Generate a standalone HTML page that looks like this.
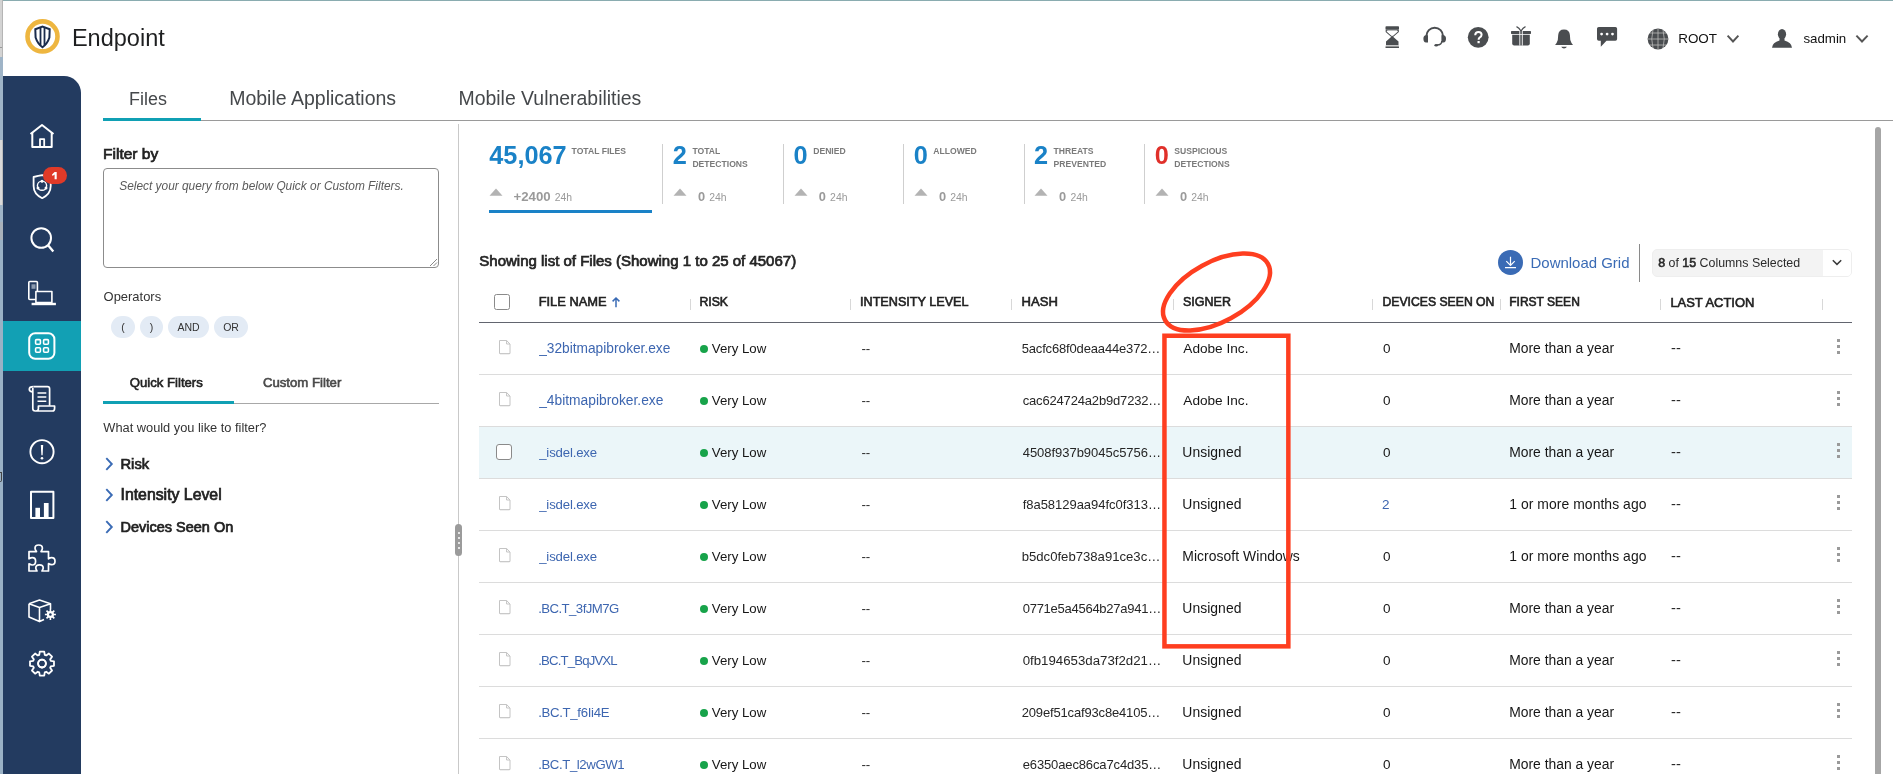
<!DOCTYPE html>
<html><head><meta charset="utf-8"><title>Endpoint</title>
<style>
html,body{margin:0;padding:0;background:#fff;width:1893px;height:774px;overflow:hidden;position:relative}
body{font-family:"Liberation Sans",sans-serif}
.t{position:absolute;white-space:nowrap;line-height:1}
svg{overflow:visible}
</style></head><body>
<div style="position:absolute;left:0;top:0;width:1893px;height:774px;will-change:transform">
<div style="position:absolute;left:0px;top:0px;width:1893px;height:1px;background:#8aacb0"></div>
<div style="position:absolute;left:0px;top:0px;width:3px;height:57px;background:#d3d3d3"></div>
<div style="position:absolute;left:2px;top:0px;width:1px;height:57px;background:#b5b5b5"></div>
<div style="position:absolute;left:0px;top:47px;width:2px;height:1px;background:#9a9a9a"></div>
<div style="position:absolute;left:0px;top:57px;width:3px;height:83px;background:#9fb4c7"></div>
<div style="position:absolute;left:0px;top:140px;width:3px;height:65px;background:#d9d9d9"></div>
<div style="position:absolute;left:2px;top:140px;width:1px;height:65px;background:#bdbdbd"></div>
<div style="position:absolute;left:0px;top:205px;width:3px;height:17px;background:#9fb4c7"></div>
<div style="position:absolute;left:0px;top:222px;width:3px;height:18px;background:#a9b1ba"></div>
<div style="position:absolute;left:0px;top:240px;width:3px;height:534px;background:#9ab1c5"></div>
<div style="position:absolute;left:0px;top:472px;width:2px;height:10px;background:#444;border-radius:0 0 2px 0"></div>
<div style="position:absolute;left:0px;top:473px;width:1px;height:8px;background:#9ab1c5"></div>
<svg style="position:absolute;left:0;top:0" width="90" height="70">
<circle cx="42.5" cy="36.4" r="15" fill="none" stroke="#eeb640" stroke-width="4.6"/>
<path d="M35.3 29.2 L42.5 26.6 L49.7 29.2 L49.4 37.5 Q47.5 43.6 42.5 47.2 Q37.5 43.6 35.6 37.5 Z" fill="none" stroke="#1b2c4c" stroke-width="2"/>
<path d="M40.5 27.8 V45.2 M44.5 27.8 V45.2" stroke="#1b2c4c" stroke-width="1.8"/>
</svg>
<div class="t" style="left:71.9px;top:27px;font-size:23.54px;font-weight:normal;font-style:normal;color:#1e1f20;">Endpoint</div>
<svg style="position:absolute;left:1370px;top:15px" width="523" height="45" viewBox="1370 15 523 45">
<g fill="#4a4d50">
<!-- hourglass -->
<rect x="1385.5" y="26.2" width="13.5" height="3.6" rx="0.8"/>
<path d="M1386.2 30.2 H1398.3 V31.8 L1393.2 36.3 H1391.3 L1386.2 31.8 Z" fill="none" stroke="#4a4d50" stroke-width="1.1"/>
<path d="M1392.2 36 L1398.5 41.5 V45 H1386 V41.5 Z"/>
<rect x="1385.5" y="46.3" width="13.5" height="1.6" rx="0.5"/>
<rect x="1385.8" y="45" width="13" height="1.3" fill="#c9c9c9"/>
<!-- headset -->
<path d="M1426.4 38.5 V36 A8.3 8.3 0 0 1 1443 36 V40" fill="none" stroke="#4a4d50" stroke-width="2"/>
<path d="M1428 35.2 H1426 A2.6 3.6 0 0 0 1426 42.4 H1428 Z"/>
<path d="M1441.4 35.2 H1443.4 A2.6 3.6 0 0 1 1443.4 42.4 H1441.4 Z"/>
<path d="M1441.8 41 Q1441.8 45 1437 45" fill="none" stroke="#4a4d50" stroke-width="1.4"/>
<ellipse cx="1436.2" cy="45.3" rx="1.8" ry="1.3"/>
<!-- question -->
<circle cx="1478.2" cy="37.3" r="10.4"/>
<!-- gift -->
<rect x="1511" y="31" width="20" height="2.9" rx="0.6"/>
<path d="M1512.2 34.8 H1529.8 V43.6 Q1529.8 45.6 1527.8 45.6 H1514.2 Q1512.2 45.6 1512.2 43.6 Z"/>
<!-- bell -->
<path d="M1564 29.4 Q1569.6 29.4 1569.9 35 L1570.3 40 Q1571 42.6 1573 44.9 H1555.1 Q1557.1 42.6 1557.8 40 L1558.2 35 Q1558.5 29.4 1564 29.4 Z"/>
<path d="M1561.2 46.8 H1566.9 Q1566 48.4 1564 48.4 Q1562.1 48.4 1561.2 46.8 Z"/>
<!-- chat -->
<path d="M1598.8 26.9 H1615.4 Q1617.1 26.9 1617.1 28.6 V39 Q1617.1 40.8 1615.4 40.8 H1606.5 L1600.8 46.8 V40.8 H1598.8 Q1597 40.8 1597 39 V28.6 Q1597 26.9 1598.8 26.9 Z"/>
<!-- user -->
<ellipse cx="1782" cy="34.3" rx="4.1" ry="5.3"/>
<path d="M1779.5 38.5 H1784.5 V40.6 Q1791.5 42.5 1792 47.8 H1772 Q1772.5 42.5 1779.5 40.6 Z"/>
</g>
<g fill="#fff">
<path d="M1387.4 30.6 H1397.1 V31.6 L1392.6 35.6 H1391.9 L1387.4 31.6 Z"/>
</g>
<path d="M1475.2 35.2 Q1475.4 32 1478.5 32 Q1481.6 32 1481.6 34.8 Q1481.6 36.6 1479.6 37.6 Q1478.6 38.2 1478.6 39.8" fill="none" stroke="#fff" stroke-width="2"/><rect x="1477.5" y="41" width="2.2" height="2.2" fill="#fff"/>
<path d="M1519.8 31 V45.6 M1522.3 31 V45.6" stroke="#fff" stroke-width="0.9"/>
<path d="M1521 31 Q1519 27.5 1516.5 26.6 M1521 31 Q1523 27.5 1525.5 26.6" fill="none" stroke="#4a4d50" stroke-width="1.3"/>
<circle cx="1601.6" cy="34.1" r="1.4" fill="#fff"/><circle cx="1607.1" cy="34.1" r="1.4" fill="#fff"/><circle cx="1612.5" cy="34.1" r="1.4" fill="#fff"/>
<!-- globe -->
<circle cx="1658" cy="39" r="10.4" fill="#4a4d50"/>
<g stroke="#b9b9b9" stroke-width="0.9" fill="none" opacity="0.9">
<path d="M1658 28.6 V49.4 M1647.6 39 H1668.4 M1650 33 H1666 M1650 45 H1666 M1653 29.8 Q1650.5 39 1653 48.2 M1663 29.8 Q1665.5 39 1663 48.2"/>
</g>
<path d="M1727.6 35.6 L1733 41.5 L1738.4 35.6" fill="none" stroke="#555" stroke-width="1.9"/>
<path d="M1856.4 35.6 L1862 41.5 L1867.6 35.6" fill="none" stroke="#555" stroke-width="1.9"/>
</svg>
<div class="t" style="left:1678.2px;top:32px;font-size:13.44px;font-weight:normal;font-style:normal;color:#111;">ROOT</div>
<div class="t" style="left:1803.4px;top:32px;font-size:13.31px;font-weight:normal;font-style:normal;color:#111;">sadmin</div>
<div style="position:absolute;left:3px;top:76px;width:78px;height:698px;background:#233b60;border-top-right-radius:17px"></div>
<div style="position:absolute;left:3px;top:321px;width:78px;height:50px;background:#12a0b4"></div>
<svg style="position:absolute;left:0;top:100px" width="90" height="600" viewBox="0 100 90 600">
<g fill="none" stroke="#fff" stroke-width="2" stroke-linejoin="round">
<!-- home -->
<path d="M30.5 134 L42 125 L53.5 134"/>
<path d="M32.3 132.5 V147 H51.7 V132.5"/>
<path d="M40 147 V139.2 H44.2 V147" stroke-width="1.8"/>
<!-- shield -->
<path d="M33.6 177 Q38.5 176 42.2 175.2 Q46 176 50.7 177 V186 Q50.7 194 42.2 198.2 Q33.6 194 33.6 186 Z" stroke-width="1.8"/>
<circle cx="42" cy="185.7" r="4.6" stroke-width="1.4"/><circle cx="42" cy="181.2" r="1.5" fill="#fff" stroke="none"/><circle cx="38" cy="188" r="1.5" fill="#fff" stroke="none"/><circle cx="46" cy="188" r="1.5" fill="#fff" stroke="none"/>
<!-- search -->
<circle cx="41.2" cy="238" r="9.8"/>
<path d="M48.3 245.5 L53.3 251.5" stroke-width="2.3"/>
<!-- devices -->
<rect x="28.8" y="281.5" width="8.6" height="18" rx="1" stroke-width="1.6"/>
<rect x="31.5" y="284.3" width="4" height="4.5" fill="#8c9bb0" stroke="none"/><rect x="35.9" y="291.5" width="16" height="11" stroke-width="1.6" fill="#233b60"/>
<path d="M31.6 304 H55.9" stroke-width="2.4"/>
<!-- apps -->
<rect x="29.2" y="333.2" width="25.2" height="25.5" rx="6"/>
<rect x="35.6" y="339.6" width="4.8" height="4.6" rx="1" stroke-width="1.6"/>
<rect x="43.6" y="339.6" width="4.8" height="4.6" rx="1" stroke-width="1.6"/>
<rect x="35.6" y="347.7" width="4.8" height="4.6" rx="1" stroke-width="1.6"/>
<rect x="43.6" y="347.7" width="4.8" height="4.6" rx="1" stroke-width="1.6"/>
<!-- scroll -->
<path d="M33.5 386.7 H47.5 Q49.6 386.7 49.6 388.8 V405.8" stroke-width="1.7"/>
<path d="M33.5 386.7 Q29.3 386.7 29.3 389.3 Q29.3 391.8 33 391.8" stroke-width="1.7"/>
<path d="M32.8 388 V408.6 Q32.8 411 35.2 411 H52.5 Q54.6 411 54.6 408.2 V406 H38.4 V408.8 Q38.4 411 36 411" stroke-width="1.7"/>
<path d="M37.5 392.9 H46.3 M37.5 397 H46.3 M37.5 401.3 H46.3" stroke-width="1.5"/>
<!-- alert -->
<circle cx="42" cy="451.7" r="11.6" stroke-width="1.9"/>
</g>
<g fill="#fff">
<path d="M40.8 445 H43.2 L42.6 455.2 H41.4 Z"/>
<circle cx="42" cy="458.2" r="1.3"/>
<rect x="35.4" y="507.8" width="4.6" height="9.2"/>
<rect x="43.9" y="503" width="4.7" height="14"/>
</g>
<g fill="none" stroke="#fff" stroke-width="2" stroke-linejoin="round">
<!-- chart -->
<rect x="31" y="491.8" width="22.4" height="26.2"/>
<!-- puzzle -->
<path d="M29 551.6 H36.5 Q35 549.5 35 548.3 Q35 545 38.7 545 Q42.4 545 42.4 548.3 Q42.4 549.5 41 551.6 H48.5 V558.8 Q50.3 557.6 51.6 557.6 Q55 557.6 55 561.2 Q55 564.7 51.6 564.7 Q50.3 564.7 48.5 563.6 V571 H42 Q43.2 569 43.2 568 Q43.2 564.8 39.5 564.8 Q35.8 564.8 35.8 568 Q35.8 569 37 571 H29 V563.8 Q31 565 32.3 565 Q35.6 565 35.6 561.3 Q35.6 557.7 32.3 557.7 Q31 557.7 29 558.8 Z" stroke-width="1.7"/>
<!-- cube -->
<path d="M29 603.8 L39.5 600 L50.5 603.8 V609 M29 603.8 V617 L39.5 621.6 L44 619.6 M29 603.8 L39.5 607.6 L50.5 603.8 M39.5 607.6 V621.6" stroke-width="1.6"/>
</g>
<g fill="#fff">
<circle cx="50.4" cy="614.5" r="3.6"/>
<path d="M50.4 609 V620 M44.9 614.5 H55.9 M46.5 610.6 L54.3 618.4 M54.3 610.6 L46.5 618.4" stroke="#fff" stroke-width="1.6"/>
<circle cx="50.4" cy="614.5" r="1.3" fill="#233b60"/>
</g>
<!-- gear -->
<g transform="translate(42 663.6)" fill="none" stroke="#fff" stroke-width="1.8" stroke-linejoin="round">

<circle r="3.9"/>
</g>
</svg>
<svg style="position:absolute;left:0;top:0" width="90" height="774"><path d="M50.77 660.83 L53.99 661.37 L53.99 665.83 L50.77 666.37 L50.16 667.84 L52.06 670.50 L48.90 673.66 L46.24 671.76 L44.77 672.37 L44.23 675.59 L39.77 675.59 L39.23 672.37 L37.76 671.76 L35.10 673.66 L31.94 670.50 L33.84 667.84 L33.23 666.37 L30.01 665.83 L30.01 661.37 L33.23 660.83 L33.84 659.36 L31.94 656.70 L35.10 653.54 L37.76 655.44 L39.23 654.83 L39.77 651.61 L44.23 651.61 L44.77 654.83 L46.24 655.44 L48.90 653.54 L52.06 656.70 L50.16 659.36 Z" fill="none" stroke="#fff" stroke-width="1.8" stroke-linejoin="round"/><circle cx="42" cy="663.6" r="3.9" fill="none" stroke="#fff" stroke-width="1.8"/></svg>
<div style="position:absolute;left:43px;top:167px;width:24px;height:17px;background:#e03a28;border-radius:8.5px"></div>
<svg style="position:absolute;left:0;top:0" width="90" height="200"><path d="M54.6 172 H56.7 V179.2 H54.6 V174.6 L52.6 176 L52 174.4 Z" fill="#fff"/></svg>
<div style="position:absolute;left:103px;top:120px;width:1790px;height:1px;background:#9a9a9a"></div>
<div style="position:absolute;left:103px;top:118px;width:98px;height:3px;background:#10a0b4"></div>
<div class="t" style="left:129.1px;top:91px;font-size:17.94px;font-weight:normal;font-style:normal;color:#45484b;">Files</div>
<div class="t" style="left:229.2px;top:89px;font-size:19.51px;font-weight:normal;font-style:normal;color:#45484b;">Mobile Applications</div>
<div class="t" style="left:458.5px;top:89px;font-size:19.43px;font-weight:normal;font-style:normal;color:#45484b;">Mobile Vulnerabilities</div>
<div style="position:absolute;left:458px;top:124px;width:1px;height:650px;background:#c9c9c9"></div>
<div style="position:absolute;left:455px;top:524px;width:7px;height:32px;background:#9b9b9b;border-radius:3.5px"></div>
<div style="position:absolute;left:457.5px;top:532px;width:2px;height:2px;background:#fff;border-radius:1px"></div>
<div style="position:absolute;left:457.5px;top:537px;width:2px;height:2px;background:#fff;border-radius:1px"></div>
<div style="position:absolute;left:457.5px;top:542px;width:2px;height:2px;background:#fff;border-radius:1px"></div>
<div style="position:absolute;left:457.5px;top:547px;width:2px;height:2px;background:#fff;border-radius:1px"></div>
<div class="t" style="left:103.0px;top:146px;font-size:15.54px;font-weight:normal;font-style:normal;-webkit-text-stroke:0.72px #222;color:#222;">Filter by</div>
<div style="position:absolute;left:103px;top:168px;width:336px;height:100px;box-sizing:border-box;border:1px solid #8c8c8c;border-radius:4px;background:#fff"></div>
<svg style="position:absolute;left:428px;top:257px" width="10" height="10"><path d="M2 9 L9 2 M5.5 9 L9 5.5" stroke="#888" stroke-width="1"/></svg>
<div class="t" style="left:119.3px;top:181px;font-size:11.89px;font-weight:normal;font-style:italic;color:#5a5a5a;">Select your query from below Quick or Custom Filters.</div>
<div class="t" style="left:103.6px;top:291px;font-size:12.94px;font-weight:normal;font-style:normal;color:#333;">Operators</div>
<div style="position:absolute;left:111px;top:316px;width:24px;height:22px;background:#e3ebf5;border-radius:11px"></div>
<div class="t" style="left:111px;top:322.45px;width:24px;text-align:center;font-size:10.5px;color:#333;line-height:1">(</div>
<div style="position:absolute;left:140px;top:316px;width:23px;height:22px;background:#e3ebf5;border-radius:11px"></div>
<div class="t" style="left:140px;top:322.45px;width:23px;text-align:center;font-size:10.5px;color:#333;line-height:1">)</div>
<div style="position:absolute;left:168px;top:316px;width:41px;height:22px;background:#e3ebf5;border-radius:11px"></div>
<div class="t" style="left:168px;top:322.45px;width:41px;text-align:center;font-size:10.5px;color:#333;line-height:1">AND</div>
<div style="position:absolute;left:214px;top:316px;width:34px;height:22px;background:#e3ebf5;border-radius:11px"></div>
<div class="t" style="left:214px;top:322.45px;width:34px;text-align:center;font-size:10.5px;color:#333;line-height:1">OR</div>
<div style="position:absolute;left:103px;top:403px;width:336px;height:1px;background:#a8a8a8"></div>
<div style="position:absolute;left:103px;top:401px;width:131px;height:3px;background:#10a0b4"></div>
<div class="t" style="left:129.8px;top:376px;font-size:13.15px;font-weight:normal;font-style:normal;-webkit-text-stroke:0.6px #222;color:#222;">Quick Filters</div>
<div class="t" style="left:262.9px;top:376px;font-size:13.2px;font-weight:normal;font-style:normal;-webkit-text-stroke:0.6px #4a4a4a;color:#4a4a4a;">Custom Filter</div>
<div class="t" style="left:103.3px;top:422px;font-size:12.82px;font-weight:normal;font-style:normal;color:#333;">What would you like to filter?</div>
<div class="t" style="left:120.5px;top:457px;font-size:14.71px;font-weight:normal;font-style:normal;-webkit-text-stroke:0.72px #222;color:#222;">Risk</div>
<svg style="position:absolute;left:100px;top:453.7px" width="20" height="20"><path d="M6.3 4.2 L11.8 10 L6.3 15.8" fill="none" stroke="#3a6bb5" stroke-width="1.9"/></svg>
<div class="t" style="left:120.5px;top:487px;font-size:15.83px;font-weight:normal;font-style:normal;-webkit-text-stroke:0.72px #222;color:#222;">Intensity Level</div>
<svg style="position:absolute;left:100px;top:484.7px" width="20" height="20"><path d="M6.3 4.2 L11.8 10 L6.3 15.8" fill="none" stroke="#3a6bb5" stroke-width="1.9"/></svg>
<div class="t" style="left:120.5px;top:520px;font-size:14.49px;font-weight:normal;font-style:normal;-webkit-text-stroke:0.72px #222;color:#222;">Devices Seen On</div>
<svg style="position:absolute;left:100px;top:516.6px" width="20" height="20"><path d="M6.3 4.2 L11.8 10 L6.3 15.8" fill="none" stroke="#3a6bb5" stroke-width="1.9"/></svg>
<div class="t" style="left:489.3px;top:143px;font-size:25.3px;font-weight:bold;font-style:normal;color:#1a82c7;">45,067</div>
<div class="t" style="left:571.6px;top:147px;font-size:8.6px;font-weight:bold;font-style:normal;color:#7a7a7a;">TOTAL FILES</div>
<svg style="position:absolute;left:488.8px;top:188px" width="15" height="9"><path d="M0.5 7.8 L7 0.5 L13.5 7.8 Z" fill="#b3b3b3"/></svg>
<div class="t" style="left:513.5px;top:190px;font-size:13.24px;font-weight:bold;font-style:normal;color:#9a9a9a;">+2400</div>
<div class="t" style="left:554.7px;top:193px;font-size:10.42px;font-weight:normal;font-style:normal;color:#9a9a9a;">24h</div>
<div style="position:absolute;left:489px;top:210px;width:163px;height:3px;background:#1a82c7"></div>
<div style="position:absolute;left:662.3px;top:144px;width:1px;height:60px;background:#cfcfcf"></div>
<div class="t" style="left:672.7px;top:143px;font-size:25.3px;font-weight:bold;font-style:normal;color:#1a82c7;">2</div>
<div class="t" style="left:692.4px;top:147px;font-size:8.6px;font-weight:bold;font-style:normal;color:#7a7a7a;">TOTAL</div>
<div class="t" style="left:692.4px;top:160px;font-size:8.6px;font-weight:bold;font-style:normal;color:#7a7a7a;">DETECTIONS</div>
<svg style="position:absolute;left:673.2px;top:188px" width="15" height="9"><path d="M0.5 7.8 L7 0.5 L13.5 7.8 Z" fill="#b3b3b3"/></svg>
<div class="t" style="left:697.9px;top:191px;font-size:12.8px;font-weight:bold;font-style:normal;color:#9a9a9a;">0</div>
<div class="t" style="left:709.2px;top:193px;font-size:10.42px;font-weight:normal;font-style:normal;color:#9a9a9a;">24h</div>
<div style="position:absolute;left:783.2px;top:144px;width:1px;height:60px;background:#cfcfcf"></div>
<div class="t" style="left:793.6px;top:143px;font-size:25.3px;font-weight:bold;font-style:normal;color:#1a82c7;">0</div>
<div class="t" style="left:813.2px;top:147px;font-size:8.6px;font-weight:bold;font-style:normal;color:#7a7a7a;">DENIED</div>
<svg style="position:absolute;left:794.1px;top:188px" width="15" height="9"><path d="M0.5 7.8 L7 0.5 L13.5 7.8 Z" fill="#b3b3b3"/></svg>
<div class="t" style="left:818.8px;top:191px;font-size:12.8px;font-weight:bold;font-style:normal;color:#9a9a9a;">0</div>
<div class="t" style="left:830.1px;top:193px;font-size:10.42px;font-weight:normal;font-style:normal;color:#9a9a9a;">24h</div>
<div style="position:absolute;left:903.3px;top:144px;width:1px;height:60px;background:#cfcfcf"></div>
<div class="t" style="left:913.7px;top:143px;font-size:25.3px;font-weight:bold;font-style:normal;color:#1a82c7;">0</div>
<div class="t" style="left:933.3px;top:147px;font-size:8.6px;font-weight:bold;font-style:normal;color:#7a7a7a;">ALLOWED</div>
<svg style="position:absolute;left:914.2px;top:188px" width="15" height="9"><path d="M0.5 7.8 L7 0.5 L13.5 7.8 Z" fill="#b3b3b3"/></svg>
<div class="t" style="left:938.9px;top:191px;font-size:12.8px;font-weight:bold;font-style:normal;color:#9a9a9a;">0</div>
<div class="t" style="left:950.2px;top:193px;font-size:10.42px;font-weight:normal;font-style:normal;color:#9a9a9a;">24h</div>
<div style="position:absolute;left:1023.5px;top:144px;width:1px;height:60px;background:#cfcfcf"></div>
<div class="t" style="left:1033.9px;top:143px;font-size:25.3px;font-weight:bold;font-style:normal;color:#1a82c7;">2</div>
<div class="t" style="left:1053.6px;top:147px;font-size:8.6px;font-weight:bold;font-style:normal;color:#7a7a7a;">THREATS</div>
<div class="t" style="left:1053.6px;top:160px;font-size:8.6px;font-weight:bold;font-style:normal;color:#7a7a7a;">PREVENTED</div>
<svg style="position:absolute;left:1034.4px;top:188px" width="15" height="9"><path d="M0.5 7.8 L7 0.5 L13.5 7.8 Z" fill="#b3b3b3"/></svg>
<div class="t" style="left:1059.1px;top:191px;font-size:12.8px;font-weight:bold;font-style:normal;color:#9a9a9a;">0</div>
<div class="t" style="left:1070.4px;top:193px;font-size:10.42px;font-weight:normal;font-style:normal;color:#9a9a9a;">24h</div>
<div style="position:absolute;left:1144.3px;top:144px;width:1px;height:60px;background:#cfcfcf"></div>
<div class="t" style="left:1154.7px;top:143px;font-size:25.3px;font-weight:bold;font-style:normal;color:#e0302a;">0</div>
<div class="t" style="left:1174.3px;top:147px;font-size:8.6px;font-weight:bold;font-style:normal;color:#7a7a7a;">SUSPICIOUS</div>
<div class="t" style="left:1174.3px;top:160px;font-size:8.6px;font-weight:bold;font-style:normal;color:#7a7a7a;">DETECTIONS</div>
<svg style="position:absolute;left:1155.2px;top:188px" width="15" height="9"><path d="M0.5 7.8 L7 0.5 L13.5 7.8 Z" fill="#b3b3b3"/></svg>
<div class="t" style="left:1179.9px;top:191px;font-size:12.8px;font-weight:bold;font-style:normal;color:#9a9a9a;">0</div>
<div class="t" style="left:1191.2px;top:193px;font-size:10.42px;font-weight:normal;font-style:normal;color:#9a9a9a;">24h</div>
<div class="t" style="left:479.3px;top:253px;font-size:15.0px;font-weight:normal;font-style:normal;-webkit-text-stroke:0.72px #252525;color:#252525;">Showing list of Files (Showing 1 to 25 of 45067)</div>
<svg style="position:absolute;left:1490px;top:242px" width="40" height="40" viewBox="1490 242 40 40">
<circle cx="1510.5" cy="262.4" r="12.5" fill="#3a6bb5"/>
<path d="M1510.5 256.8 V265.2 M1506.3 261.2 L1510.5 265.4 L1514.7 261.2 M1505 267.6 H1516" fill="none" stroke="#fff" stroke-width="1.2"/>
</svg>
<div class="t" style="left:1530.5px;top:256px;font-size:14.97px;font-weight:normal;font-style:normal;color:#3a6bb5;">Download Grid</div>
<div style="position:absolute;left:1639px;top:244px;width:1px;height:38px;background:#8a8a8a"></div>
<div style="position:absolute;left:1652px;top:248.5px;width:200px;height:28px;box-sizing:border-box;background:#f3f3f3;border:1px solid #eeeeee;border-radius:5px"></div>
<div style="position:absolute;left:1823px;top:249.5px;width:28px;height:26px;background:#fff;border-radius:0 4px 4px 0"></div>
<div class="t" style="left:1658.2px;top:256.6px;font-size:12.4px;color:#2a2a2a;line-height:1"><span style="-webkit-text-stroke:0.6px #2a2a2a">8</span> of <span style="-webkit-text-stroke:0.6px #2a2a2a">15</span> Columns Selected</div>
<svg style="position:absolute;left:1828px;top:255px" width="18" height="14"><path d="M4.8 5.2 L9 9.4 L13.2 5.2" fill="none" stroke="#3a3a3a" stroke-width="1.5"/></svg>
<div style="position:absolute;left:494px;top:294px;width:16px;height:16px;box-sizing:border-box;border:1px solid #8a8a8a;border-radius:2.5px;background:#fff"></div>
<div class="t" style="left:538.7px;top:296px;font-size:12.86px;font-weight:normal;font-style:normal;-webkit-text-stroke:0.6px #222;color:#222;">FILE NAME</div>
<div class="t" style="left:699.4px;top:296px;font-size:12.29px;font-weight:normal;font-style:normal;-webkit-text-stroke:0.6px #222;color:#222;">RISK</div>
<div class="t" style="left:860.0px;top:296px;font-size:12.63px;font-weight:normal;font-style:normal;-webkit-text-stroke:0.6px #222;color:#222;">INTENSITY LEVEL</div>
<div class="t" style="left:1021.6px;top:295px;font-size:13.09px;font-weight:normal;font-style:normal;-webkit-text-stroke:0.6px #222;color:#222;">HASH</div>
<div class="t" style="left:1183.0px;top:296px;font-size:12.5px;font-weight:normal;font-style:normal;-webkit-text-stroke:0.6px #222;color:#222;">SIGNER</div>
<div class="t" style="left:1382.5px;top:296px;font-size:12.21px;font-weight:normal;font-style:normal;-webkit-text-stroke:0.6px #222;color:#222;">DEVICES SEEN ON</div>
<div class="t" style="left:1509.2px;top:296px;font-size:12.04px;font-weight:normal;font-style:normal;-webkit-text-stroke:0.6px #222;color:#222;">FIRST SEEN</div>
<div class="t" style="left:1670.4px;top:297px;font-size:12.96px;font-weight:normal;font-style:normal;-webkit-text-stroke:0.6px #222;color:#222;">LAST ACTION</div>
<svg style="position:absolute;left:608px;top:293.5px" width="16" height="16"><path d="M8 4 V13.3 M4.6 7.4 L8 4 L11.4 7.4" fill="none" stroke="#3a6bb5" stroke-width="1.5"/></svg>
<div style="position:absolute;left:689.5px;top:298.5px;width:1px;height:11.5px;background:#d8d8d8"></div>
<div style="position:absolute;left:850.4px;top:298.5px;width:1px;height:11.5px;background:#d8d8d8"></div>
<div style="position:absolute;left:1011.4px;top:298.5px;width:1px;height:11.5px;background:#d8d8d8"></div>
<div style="position:absolute;left:1172.5px;top:298.5px;width:1px;height:11.5px;background:#d8d8d8"></div>
<div style="position:absolute;left:1372.4px;top:298.5px;width:1px;height:11.5px;background:#d8d8d8"></div>
<div style="position:absolute;left:1499.6px;top:298.5px;width:1px;height:11.5px;background:#d8d8d8"></div>
<div style="position:absolute;left:1660.3px;top:298.5px;width:1px;height:11.5px;background:#d8d8d8"></div>
<div style="position:absolute;left:1821.5px;top:298.5px;width:1px;height:11.5px;background:#d8d8d8"></div>
<div style="position:absolute;left:479px;top:322px;width:1373px;height:1px;background:#62656f"></div>
<div style="position:absolute;left:479px;top:374px;width:1373px;height:1px;background:#dcdcdc"></div>
<svg style="position:absolute;left:497px;top:338.7px" width="16" height="20"><path d="M2.5 1.5 H9.6 L13 5 V14.5 H2.5 Z M9.6 1.5 V5 H13" fill="#fff" stroke="#c4c4c4" stroke-width="1"/><path d="M3 15.3 H12.5" stroke="#e6e6e6" stroke-width="0.8"/></svg>
<div class="t" style="left:539.2px;top:342px;font-size:13.73px;font-weight:normal;font-style:normal;color:#3d66b0;">_32bitmapibroker.exe</div>
<div style="position:absolute;left:699.8px;top:344.7px;width:8px;height:8px;background:#17a34a;border-radius:50%"></div>
<div class="t" style="left:711.8px;top:342px;font-size:13.24px;font-weight:normal;font-style:normal;color:#161616;">Very Low</div>
<div class="t" style="left:861.4px;top:342px;font-size:13.33px;font-weight:normal;font-style:normal;color:#2a2a2a;">--</div>
<div class="t" style="left:1021.7px;top:342px;font-size:13.0px;font-weight:normal;font-style:normal;color:#262626;letter-spacing:-0.16px;">5acfc68f0deaa44e372…</div>
<div class="t" style="left:1183.3px;top:342px;font-size:13.63px;font-weight:normal;font-style:normal;color:#161616;">Adobe Inc.</div>
<div class="t" style="left:1383.0px;top:342px;font-size:13.5px;font-weight:normal;font-style:normal;color:#161616;">0</div>
<div class="t" style="left:1509.2px;top:342px;font-size:13.89px;font-weight:normal;font-style:normal;color:#161616;">More than a year</div>
<div class="t" style="left:1671.1px;top:341px;font-size:14.7px;font-weight:normal;font-style:normal;color:#2a2a2a;">--</div>
<div style="position:absolute;left:1837px;top:339px;width:3px;height:3px;background:#9a9a9a"></div>
<div style="position:absolute;left:1837px;top:345px;width:3px;height:3px;background:#9a9a9a"></div>
<div style="position:absolute;left:1837px;top:351px;width:3px;height:3px;background:#9a9a9a"></div>
<div style="position:absolute;left:479px;top:426px;width:1373px;height:1px;background:#dcdcdc"></div>
<svg style="position:absolute;left:497px;top:390.7px" width="16" height="20"><path d="M2.5 1.5 H9.6 L13 5 V14.5 H2.5 Z M9.6 1.5 V5 H13" fill="#fff" stroke="#c4c4c4" stroke-width="1"/><path d="M3 15.3 H12.5" stroke="#e6e6e6" stroke-width="0.8"/></svg>
<div class="t" style="left:539.2px;top:394px;font-size:13.8px;font-weight:normal;font-style:normal;color:#3d66b0;">_4bitmapibroker.exe</div>
<div style="position:absolute;left:699.8px;top:396.7px;width:8px;height:8px;background:#17a34a;border-radius:50%"></div>
<div class="t" style="left:711.8px;top:394px;font-size:13.24px;font-weight:normal;font-style:normal;color:#161616;">Very Low</div>
<div class="t" style="left:861.4px;top:394px;font-size:13.33px;font-weight:normal;font-style:normal;color:#2a2a2a;">--</div>
<div class="t" style="left:1022.7px;top:394px;font-size:13.0px;font-weight:normal;font-style:normal;color:#262626;letter-spacing:-0.17px;">cac624724a2b9d7232…</div>
<div class="t" style="left:1183.3px;top:394px;font-size:13.63px;font-weight:normal;font-style:normal;color:#161616;">Adobe Inc.</div>
<div class="t" style="left:1383.0px;top:394px;font-size:13.5px;font-weight:normal;font-style:normal;color:#161616;">0</div>
<div class="t" style="left:1509.2px;top:394px;font-size:13.89px;font-weight:normal;font-style:normal;color:#161616;">More than a year</div>
<div class="t" style="left:1671.1px;top:393px;font-size:14.7px;font-weight:normal;font-style:normal;color:#2a2a2a;">--</div>
<div style="position:absolute;left:1837px;top:391px;width:3px;height:3px;background:#9a9a9a"></div>
<div style="position:absolute;left:1837px;top:397px;width:3px;height:3px;background:#9a9a9a"></div>
<div style="position:absolute;left:1837px;top:403px;width:3px;height:3px;background:#9a9a9a"></div>
<div style="position:absolute;left:479px;top:427px;width:1373px;height:51px;background:#ebf6f9"></div>
<div style="position:absolute;left:479px;top:478px;width:1373px;height:1px;background:#dcdcdc"></div>
<div style="position:absolute;left:496px;top:444px;width:16px;height:16px;box-sizing:border-box;border:1.2px solid #8a8a8a;border-radius:3px;background:#fff"></div>
<div class="t" style="left:539.2px;top:446px;font-size:13.2px;font-weight:normal;font-style:normal;color:#3d66b0;letter-spacing:-0.16px;">_isdel.exe</div>
<div style="position:absolute;left:699.8px;top:448.7px;width:8px;height:8px;background:#17a34a;border-radius:50%"></div>
<div class="t" style="left:711.8px;top:446px;font-size:13.24px;font-weight:normal;font-style:normal;color:#161616;">Very Low</div>
<div class="t" style="left:861.4px;top:446px;font-size:13.33px;font-weight:normal;font-style:normal;color:#2a2a2a;">--</div>
<div class="t" style="left:1022.7px;top:446px;font-size:13.0px;font-weight:normal;font-style:normal;color:#262626;letter-spacing:-0.03px;">4508f937b9045c5756…</div>
<div class="t" style="left:1182.3px;top:446px;font-size:13.9px;font-weight:normal;font-style:normal;color:#161616;letter-spacing:0.06px;">Unsigned</div>
<div class="t" style="left:1383.0px;top:446px;font-size:13.5px;font-weight:normal;font-style:normal;color:#161616;">0</div>
<div class="t" style="left:1509.2px;top:446px;font-size:13.89px;font-weight:normal;font-style:normal;color:#161616;">More than a year</div>
<div class="t" style="left:1671.1px;top:445px;font-size:14.7px;font-weight:normal;font-style:normal;color:#2a2a2a;">--</div>
<div style="position:absolute;left:1837px;top:443px;width:3px;height:3px;background:#9a9a9a"></div>
<div style="position:absolute;left:1837px;top:449px;width:3px;height:3px;background:#9a9a9a"></div>
<div style="position:absolute;left:1837px;top:455px;width:3px;height:3px;background:#9a9a9a"></div>
<div style="position:absolute;left:479px;top:530px;width:1373px;height:1px;background:#dcdcdc"></div>
<svg style="position:absolute;left:497px;top:494.7px" width="16" height="20"><path d="M2.5 1.5 H9.6 L13 5 V14.5 H2.5 Z M9.6 1.5 V5 H13" fill="#fff" stroke="#c4c4c4" stroke-width="1"/><path d="M3 15.3 H12.5" stroke="#e6e6e6" stroke-width="0.8"/></svg>
<div class="t" style="left:539.2px;top:498px;font-size:13.2px;font-weight:normal;font-style:normal;color:#3d66b0;letter-spacing:-0.16px;">_isdel.exe</div>
<div style="position:absolute;left:699.8px;top:500.7px;width:8px;height:8px;background:#17a34a;border-radius:50%"></div>
<div class="t" style="left:711.8px;top:498px;font-size:13.24px;font-weight:normal;font-style:normal;color:#161616;">Very Low</div>
<div class="t" style="left:861.4px;top:498px;font-size:13.33px;font-weight:normal;font-style:normal;color:#2a2a2a;">--</div>
<div class="t" style="left:1022.7px;top:498px;font-size:13.0px;font-weight:normal;font-style:normal;color:#262626;letter-spacing:-0.03px;">f8a58129aa94fc0f313…</div>
<div class="t" style="left:1182.3px;top:498px;font-size:13.9px;font-weight:normal;font-style:normal;color:#161616;letter-spacing:0.06px;">Unsigned</div>
<div class="t" style="left:1382.0px;top:498px;font-size:13.5px;font-weight:normal;font-style:normal;color:#3d66b0;">2</div>
<div class="t" style="left:1509.2px;top:498px;font-size:13.9px;font-weight:normal;font-style:normal;color:#161616;letter-spacing:0.07px;">1 or more months ago</div>
<div class="t" style="left:1671.1px;top:497px;font-size:14.7px;font-weight:normal;font-style:normal;color:#2a2a2a;">--</div>
<div style="position:absolute;left:1837px;top:495px;width:3px;height:3px;background:#9a9a9a"></div>
<div style="position:absolute;left:1837px;top:501px;width:3px;height:3px;background:#9a9a9a"></div>
<div style="position:absolute;left:1837px;top:507px;width:3px;height:3px;background:#9a9a9a"></div>
<div style="position:absolute;left:479px;top:582px;width:1373px;height:1px;background:#dcdcdc"></div>
<svg style="position:absolute;left:497px;top:546.7px" width="16" height="20"><path d="M2.5 1.5 H9.6 L13 5 V14.5 H2.5 Z M9.6 1.5 V5 H13" fill="#fff" stroke="#c4c4c4" stroke-width="1"/><path d="M3 15.3 H12.5" stroke="#e6e6e6" stroke-width="0.8"/></svg>
<div class="t" style="left:539.2px;top:550px;font-size:13.2px;font-weight:normal;font-style:normal;color:#3d66b0;letter-spacing:-0.16px;">_isdel.exe</div>
<div style="position:absolute;left:699.8px;top:552.7px;width:8px;height:8px;background:#17a34a;border-radius:50%"></div>
<div class="t" style="left:711.8px;top:550px;font-size:13.24px;font-weight:normal;font-style:normal;color:#161616;">Very Low</div>
<div class="t" style="left:861.4px;top:550px;font-size:13.33px;font-weight:normal;font-style:normal;color:#2a2a2a;">--</div>
<div class="t" style="left:1021.7px;top:550px;font-size:13.14px;font-weight:normal;font-style:normal;color:#262626;">b5dc0feb738a91ce3c…</div>
<div class="t" style="left:1182.3px;top:550px;font-size:13.9px;font-weight:normal;font-style:normal;color:#161616;letter-spacing:0.06px;">Microsoft Windows</div>
<div class="t" style="left:1383.0px;top:550px;font-size:13.5px;font-weight:normal;font-style:normal;color:#161616;">0</div>
<div class="t" style="left:1509.2px;top:550px;font-size:13.9px;font-weight:normal;font-style:normal;color:#161616;letter-spacing:0.07px;">1 or more months ago</div>
<div class="t" style="left:1671.1px;top:549px;font-size:14.7px;font-weight:normal;font-style:normal;color:#2a2a2a;">--</div>
<div style="position:absolute;left:1837px;top:547px;width:3px;height:3px;background:#9a9a9a"></div>
<div style="position:absolute;left:1837px;top:553px;width:3px;height:3px;background:#9a9a9a"></div>
<div style="position:absolute;left:1837px;top:559px;width:3px;height:3px;background:#9a9a9a"></div>
<div style="position:absolute;left:479px;top:634px;width:1373px;height:1px;background:#dcdcdc"></div>
<svg style="position:absolute;left:497px;top:598.7px" width="16" height="20"><path d="M2.5 1.5 H9.6 L13 5 V14.5 H2.5 Z M9.6 1.5 V5 H13" fill="#fff" stroke="#c4c4c4" stroke-width="1"/><path d="M3 15.3 H12.5" stroke="#e6e6e6" stroke-width="0.8"/></svg>
<div class="t" style="left:538.2px;top:602px;font-size:13.2px;font-weight:normal;font-style:normal;color:#3d66b0;letter-spacing:-0.56px;">.BC.T_3fJM7G</div>
<div style="position:absolute;left:699.8px;top:604.7px;width:8px;height:8px;background:#17a34a;border-radius:50%"></div>
<div class="t" style="left:711.8px;top:602px;font-size:13.24px;font-weight:normal;font-style:normal;color:#161616;">Very Low</div>
<div class="t" style="left:861.4px;top:602px;font-size:13.33px;font-weight:normal;font-style:normal;color:#2a2a2a;">--</div>
<div class="t" style="left:1022.7px;top:602px;font-size:13.0px;font-weight:normal;font-style:normal;color:#262626;letter-spacing:-0.26px;">0771e5a4564b27a941…</div>
<div class="t" style="left:1182.3px;top:602px;font-size:13.9px;font-weight:normal;font-style:normal;color:#161616;letter-spacing:0.06px;">Unsigned</div>
<div class="t" style="left:1383.0px;top:602px;font-size:13.5px;font-weight:normal;font-style:normal;color:#161616;">0</div>
<div class="t" style="left:1509.2px;top:602px;font-size:13.89px;font-weight:normal;font-style:normal;color:#161616;">More than a year</div>
<div class="t" style="left:1671.1px;top:601px;font-size:14.7px;font-weight:normal;font-style:normal;color:#2a2a2a;">--</div>
<div style="position:absolute;left:1837px;top:599px;width:3px;height:3px;background:#9a9a9a"></div>
<div style="position:absolute;left:1837px;top:605px;width:3px;height:3px;background:#9a9a9a"></div>
<div style="position:absolute;left:1837px;top:611px;width:3px;height:3px;background:#9a9a9a"></div>
<div style="position:absolute;left:479px;top:686px;width:1373px;height:1px;background:#dcdcdc"></div>
<svg style="position:absolute;left:497px;top:650.7px" width="16" height="20"><path d="M2.5 1.5 H9.6 L13 5 V14.5 H2.5 Z M9.6 1.5 V5 H13" fill="#fff" stroke="#c4c4c4" stroke-width="1"/><path d="M3 15.3 H12.5" stroke="#e6e6e6" stroke-width="0.8"/></svg>
<div class="t" style="left:538.2px;top:654px;font-size:13.2px;font-weight:normal;font-style:normal;color:#3d66b0;letter-spacing:-0.84px;">.BC.T_BqJVXL</div>
<div style="position:absolute;left:699.8px;top:656.7px;width:8px;height:8px;background:#17a34a;border-radius:50%"></div>
<div class="t" style="left:711.8px;top:654px;font-size:13.24px;font-weight:normal;font-style:normal;color:#161616;">Very Low</div>
<div class="t" style="left:861.4px;top:654px;font-size:13.33px;font-weight:normal;font-style:normal;color:#2a2a2a;">--</div>
<div class="t" style="left:1022.7px;top:654px;font-size:13.25px;font-weight:normal;font-style:normal;color:#262626;">0fb194653da73f2d21…</div>
<div class="t" style="left:1182.3px;top:654px;font-size:13.9px;font-weight:normal;font-style:normal;color:#161616;letter-spacing:0.06px;">Unsigned</div>
<div class="t" style="left:1383.0px;top:654px;font-size:13.5px;font-weight:normal;font-style:normal;color:#161616;">0</div>
<div class="t" style="left:1509.2px;top:654px;font-size:13.89px;font-weight:normal;font-style:normal;color:#161616;">More than a year</div>
<div class="t" style="left:1671.1px;top:653px;font-size:14.7px;font-weight:normal;font-style:normal;color:#2a2a2a;">--</div>
<div style="position:absolute;left:1837px;top:651px;width:3px;height:3px;background:#9a9a9a"></div>
<div style="position:absolute;left:1837px;top:657px;width:3px;height:3px;background:#9a9a9a"></div>
<div style="position:absolute;left:1837px;top:663px;width:3px;height:3px;background:#9a9a9a"></div>
<div style="position:absolute;left:479px;top:738px;width:1373px;height:1px;background:#dcdcdc"></div>
<svg style="position:absolute;left:497px;top:702.7px" width="16" height="20"><path d="M2.5 1.5 H9.6 L13 5 V14.5 H2.5 Z M9.6 1.5 V5 H13" fill="#fff" stroke="#c4c4c4" stroke-width="1"/><path d="M3 15.3 H12.5" stroke="#e6e6e6" stroke-width="0.8"/></svg>
<div class="t" style="left:538.2px;top:706px;font-size:13.2px;font-weight:normal;font-style:normal;color:#3d66b0;letter-spacing:-0.31px;">.BC.T_f6Ii4E</div>
<div style="position:absolute;left:699.8px;top:708.7px;width:8px;height:8px;background:#17a34a;border-radius:50%"></div>
<div class="t" style="left:711.8px;top:706px;font-size:13.24px;font-weight:normal;font-style:normal;color:#161616;">Very Low</div>
<div class="t" style="left:861.4px;top:706px;font-size:13.33px;font-weight:normal;font-style:normal;color:#2a2a2a;">--</div>
<div class="t" style="left:1021.7px;top:706px;font-size:13.0px;font-weight:normal;font-style:normal;color:#262626;letter-spacing:-0.16px;">209ef51caf93c8e4105…</div>
<div class="t" style="left:1182.3px;top:706px;font-size:13.9px;font-weight:normal;font-style:normal;color:#161616;letter-spacing:0.06px;">Unsigned</div>
<div class="t" style="left:1383.0px;top:706px;font-size:13.5px;font-weight:normal;font-style:normal;color:#161616;">0</div>
<div class="t" style="left:1509.2px;top:706px;font-size:13.89px;font-weight:normal;font-style:normal;color:#161616;">More than a year</div>
<div class="t" style="left:1671.1px;top:705px;font-size:14.7px;font-weight:normal;font-style:normal;color:#2a2a2a;">--</div>
<div style="position:absolute;left:1837px;top:703px;width:3px;height:3px;background:#9a9a9a"></div>
<div style="position:absolute;left:1837px;top:709px;width:3px;height:3px;background:#9a9a9a"></div>
<div style="position:absolute;left:1837px;top:715px;width:3px;height:3px;background:#9a9a9a"></div>
<svg style="position:absolute;left:497px;top:754.7px" width="16" height="20"><path d="M2.5 1.5 H9.6 L13 5 V14.5 H2.5 Z M9.6 1.5 V5 H13" fill="#fff" stroke="#c4c4c4" stroke-width="1"/><path d="M3 15.3 H12.5" stroke="#e6e6e6" stroke-width="0.8"/></svg>
<div class="t" style="left:538.2px;top:758px;font-size:13.2px;font-weight:normal;font-style:normal;color:#3d66b0;letter-spacing:-0.40px;">.BC.T_l2wGW1</div>
<div style="position:absolute;left:699.8px;top:760.7px;width:8px;height:8px;background:#17a34a;border-radius:50%"></div>
<div class="t" style="left:711.8px;top:758px;font-size:13.24px;font-weight:normal;font-style:normal;color:#161616;">Very Low</div>
<div class="t" style="left:861.4px;top:758px;font-size:13.33px;font-weight:normal;font-style:normal;color:#2a2a2a;">--</div>
<div class="t" style="left:1022.7px;top:758px;font-size:13.0px;font-weight:normal;font-style:normal;color:#262626;letter-spacing:-0.13px;">e6350aec86ca7c4d35…</div>
<div class="t" style="left:1182.3px;top:758px;font-size:13.9px;font-weight:normal;font-style:normal;color:#161616;letter-spacing:0.06px;">Unsigned</div>
<div class="t" style="left:1383.0px;top:758px;font-size:13.5px;font-weight:normal;font-style:normal;color:#161616;">0</div>
<div class="t" style="left:1509.2px;top:758px;font-size:13.89px;font-weight:normal;font-style:normal;color:#161616;">More than a year</div>
<div class="t" style="left:1671.1px;top:757px;font-size:14.7px;font-weight:normal;font-style:normal;color:#2a2a2a;">--</div>
<div style="position:absolute;left:1837px;top:755px;width:3px;height:3px;background:#9a9a9a"></div>
<div style="position:absolute;left:1837px;top:761px;width:3px;height:3px;background:#9a9a9a"></div>
<div style="position:absolute;left:1837px;top:767px;width:3px;height:3px;background:#9a9a9a"></div>
<div style="position:absolute;left:1875px;top:127px;width:6px;height:647px;background:#a6a6a6;border-radius:3px 3px 0 0"></div>
<svg style="position:absolute;left:0;top:0" width="1893" height="774">
<ellipse cx="1216.5" cy="292" rx="58.6" ry="30" transform="rotate(-28.6 1216.5 292)" fill="none" stroke="#fe3e20" stroke-width="4.5"/>
<rect x="1164.45" y="335.75" width="123.9" height="310.6" fill="none" stroke="#fe3e20" stroke-width="4.5"/>
</svg>
</div>
</body></html>
